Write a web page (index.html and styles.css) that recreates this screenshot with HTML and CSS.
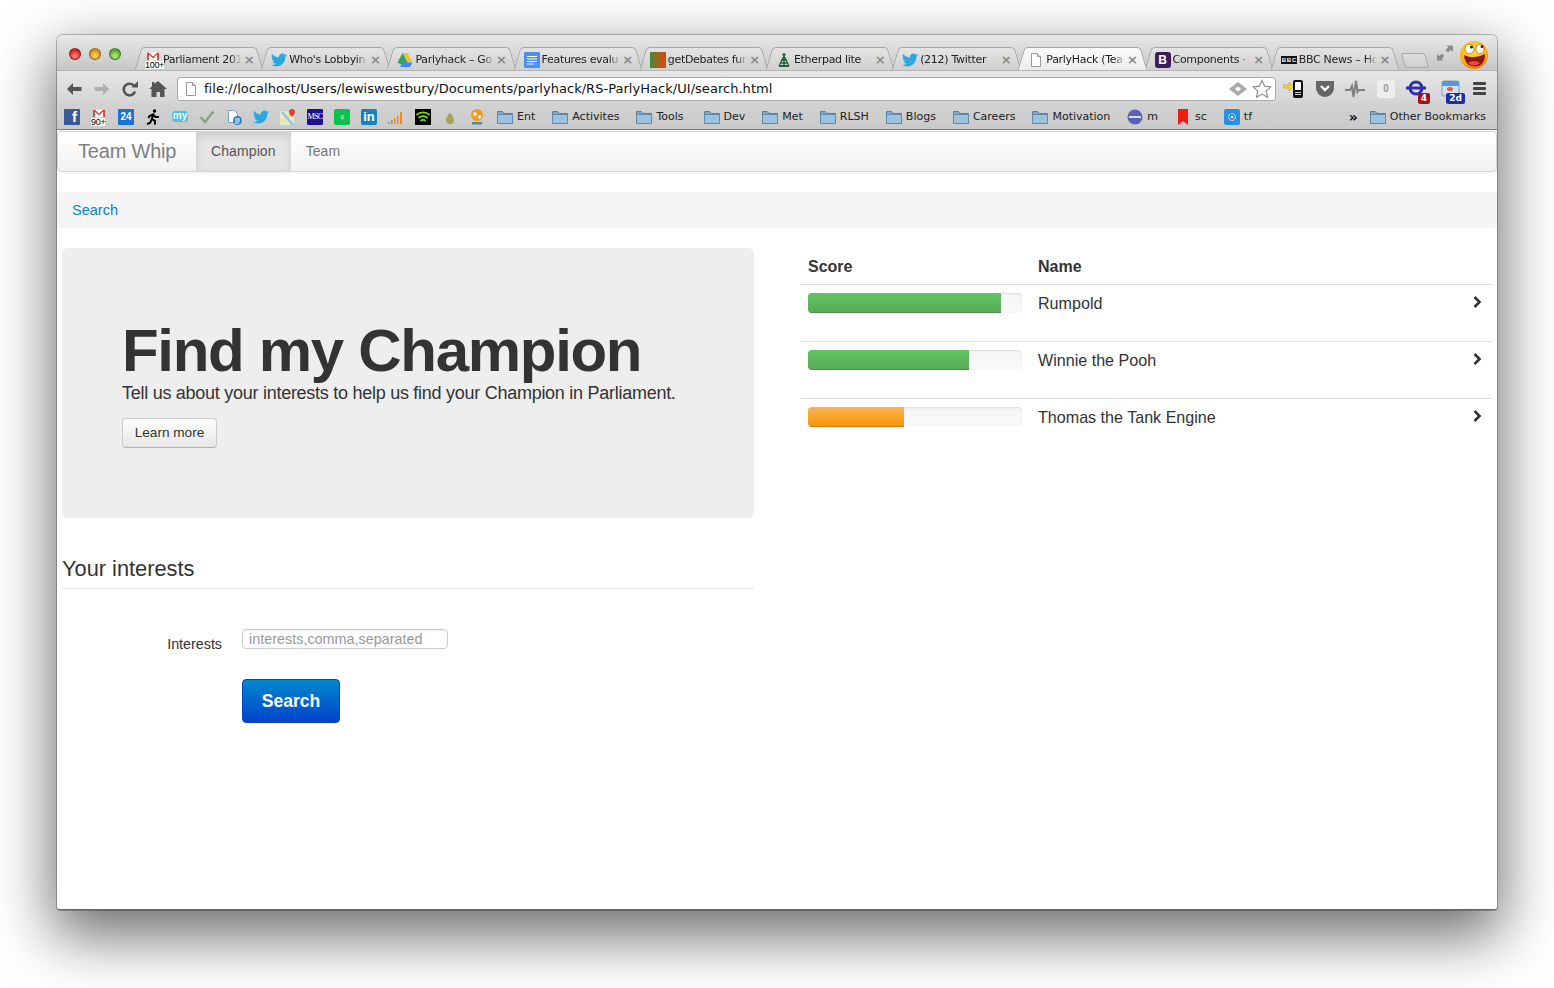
FILE: index.html
```html
<!DOCTYPE html>
<html lang="en">
<head>
    <meta charset="UTF-8">
    <meta name="viewport" content="width=device-width, initial-scale=1.0">
    <title>ParlyHack (Team Whip)</title>
    <link rel="stylesheet" href="styles.css">
</head>
<body>
    <svg class="sprite" width="0" height="0">
        <symbol id="i-bird" viewBox="0 0 24 24"><path fill="#2aa9e0" d="M23.953 4.57a10 10 0 01-2.825.775 4.958 4.958 0 002.163-2.723c-.951.555-2.005.959-3.127 1.184a4.92 4.92 0 00-8.384 4.482C7.69 8.095 4.067 6.13 1.64 3.162a4.822 4.822 0 00-.666 2.475c0 1.71.87 3.213 2.188 4.096a4.904 4.904 0 01-2.228-.616v.06a4.923 4.923 0 003.946 4.827 4.996 4.996 0 01-2.212.085 4.936 4.936 0 004.604 3.417 9.867 9.867 0 01-6.102 2.105c-.39 0-.779-.023-1.17-.067a13.995 13.995 0 007.557 2.209c9.053 0 13.998-7.496 13.998-13.985 0-.21 0-.42-.015-.63A9.935 9.935 0 0024 4.59z"/></symbol>
        <symbol id="i-page" viewBox="0 0 16 16"><path fill="#fff" stroke="#9a9a9a" d="M3.5 1.5h6l3 3v10h-9z"/><path fill="#ddd" stroke="#9a9a9a" d="M9.5 1.5v3h3"/></symbol>
        <symbol id="i-folder" viewBox="0 0 16 16"><path fill="#7ea9cc" stroke="#5b7f9f" d="M.5 14.500v-12h5l1.500 2h8.500v10z"/><path fill="#9cc2e0" stroke="#6389aa" d="M.5 14.500v-9h15v9z"/></symbol>
        <symbol id="i-gmail" viewBox="0 0 16 16"><rect y="1" width="16" height="10" fill="#fff"/><path fill="#d6453a" d="M0 1h2.500v10H0zM13.500 1H16v10h-2.500zM0 1h2.500L8 6l5.500-5H16L8 8.500z"/></symbol>
    </svg>

    <div class="window">
        <header class="chrome">
            <div class="titlebar">
                <div class="traffic">
                    <span class="light light-red"></span>
                    <span class="light light-amber"></span>
                    <span class="light light-green"></span>
                </div>
                <div class="tabs">
                    <div class="tab">
                        <span class="fav fav-gmail"><svg width="16" height="12"><use href="#i-gmail"/></svg><b>100+</b></span>
                        <span class="tab-title">Parliament 201</span><span class="tab-x">×</span>
                    </div>
                    <div class="tab">
                        <svg class="fav" width="16" height="16"><use href="#i-bird"/></svg>
                        <span class="tab-title">Who's Lobbyin</span><span class="tab-x">×</span>
                    </div>
                    <div class="tab">
                        <svg class="fav" width="16" height="16" viewBox="0 0 16 16"><path fill="#f5c02e" d="M5.500 1h5l5 9h-5z"/><path fill="#2ba160" d="M5.500 1l5 9-2.500 4.500L.5 10.500z" opacity=".95"/><path fill="#4285f4" d="M5.500 10.500h10l-2.500 4.500H3z"/></svg>
                        <span class="tab-title">Parlyhack – Go</span><span class="tab-x">×</span>
                    </div>
                    <div class="tab">
                        <svg class="fav" width="16" height="16" viewBox="0 0 16 16"><rect width="16" height="16" rx="1" fill="#4d8ff5"/><path stroke="#fff" d="M3 4.500h10M3 7h10M3 9.500h10M3 12h7"/></svg>
                        <span class="tab-title">Features evalu</span><span class="tab-x">×</span>
                    </div>
                    <div class="tab">
                        <span class="fav fav-debates"></span>
                        <span class="tab-title">getDebates fun</span><span class="tab-x">×</span>
                    </div>
                    <div class="tab">
                        <svg class="fav" width="16" height="16" viewBox="0 0 16 16"><path fill="none" stroke="#24603f" stroke-width="1.300" d="M8 4L3 14M8 4l5 10M4 11h8M5 8h6M8 4v10"/><circle cx="8" cy="2.500" r="1.500" fill="#24603f"/><path fill="#24603f" d="M3 13h10v2H3z"/></svg>
                        <span class="tab-title">Etherpad lite</span><span class="tab-x">×</span>
                    </div>
                    <div class="tab">
                        <svg class="fav" width="16" height="16"><use href="#i-bird"/></svg>
                        <span class="tab-title">(212) Twitter</span><span class="tab-x">×</span>
                    </div>
                    <div class="tab tab-active">
                        <svg class="fav" width="16" height="16"><use href="#i-page"/></svg>
                        <span class="tab-title">ParlyHack (Tea</span><span class="tab-x">×</span>
                    </div>
                    <div class="tab">
                        <span class="fav fav-boot">B</span>
                        <span class="tab-title">Components ·</span><span class="tab-x">×</span>
                    </div>
                    <div class="tab">
                        <span class="fav fav-bbc">BBC</span>
                        <span class="tab-title">BBC News – Ho</span><span class="tab-x">×</span>
                    </div>
                    <div class="new-tab"></div>
                </div>
                <svg class="fullscreen" width="16" height="16" viewBox="0 0 16 16"><path fill="#8a8a8a" d="M9.500 0.500H16V7l-2.300-2.300-2.700 2.700-2.400-2.400 2.700-2.700zM6.500 15.500H0V9l2.300 2.300L5 8.600 7.400 11l-2.700 2.700z"/></svg>
                <svg class="avatar" width="30" height="30" viewBox="0 0 30 30">
                    <defs><radialGradient id="face" cx=".45" cy=".35" r=".7"><stop offset="0" stop-color="#ffe23a"/><stop offset=".7" stop-color="#fdb011"/><stop offset="1" stop-color="#d96a06"/></radialGradient></defs>
                    <circle cx="15" cy="15" r="14" fill="url(#face)"/>
                    <ellipse cx="10.500" cy="9" rx="4.500" ry="4.800" fill="#fff" stroke="#8a5200" stroke-width=".6"/>
                    <ellipse cx="21" cy="9" rx="4" ry="4.800" fill="#fff" stroke="#8a5200" stroke-width=".6"/>
                    <circle cx="12.500" cy="7" r="1.500" fill="#222"/><circle cx="23" cy="6.500" r="1.500" fill="#222"/>
                    <path fill="#8c1712" d="M5 15q10 5 21-1 0 12-10 12.500Q6 26.500 5 15z"/>
                    <path fill="#ea4a3f" d="M9 23q6-4 12 0-6 5-12 0z"/>
                </svg>
            </div>

            <div class="toolbar">
                <svg class="tool" width="18" height="16" viewBox="0 0 18 16"><path fill="#555" d="M2 8l6-6v4h8.500v4H8v4z"/></svg>
                <svg class="tool" width="18" height="16" viewBox="0 0 18 16"><path fill="#b0b0b0" d="M16 8l-6-6v4H1.500v4H10v4z"/></svg>
                <svg class="tool" width="18" height="16" viewBox="0 0 18 16"><path fill="none" stroke="#555" stroke-width="2.600" d="M14 10.500a5.800 5.800 0 1 1-.6-5.200"/><path fill="#555" d="M10.500 6.500H17V0z"/></svg>
                <svg class="tool" width="18" height="16" viewBox="0 0 18 16"><path fill="#555" d="M9 0l9 8h-2.500v8H11v-5H7.500v5H2.500V8H0l3-2.700V1h2.500v2.100z"/></svg>
                <div class="omnibox">
                    <svg width="16" height="16"><use href="#i-page"/></svg>
                    <span class="url">file://localhost/Users/lewiswestbury/Documents/parlyhack/RS-ParlyHack/UI/search.html</span>
                    <svg width="18" height="14" viewBox="0 0 18 14"><path fill="#a9a9a9" d="M9 0l9 7-9 7-9-7zM9 4.500L5.800 7 9 9.500 12.200 7z"/></svg>
                    <svg width="20" height="20" viewBox="0 0 20 20"><path fill="#fff" stroke="#8d8d8d" stroke-width="1.200" d="M10 1.500l2.600 5.700 6.200.7-4.600 4.200 1.300 6.100-5.500-3.100-5.500 3.100 1.300-6.100L1.200 7.900l6.200-.7z"/></svg>
                </div>
                <div class="extensions">
                    <svg width="22" height="20" viewBox="0 0 22 20"><path fill="#f2de14" stroke="#a89a10" stroke-width=".5" d="M0 6h6V3l5 4.500L6 12V9H0z"/><rect x="10" y="1" width="10" height="18" rx="2" fill="#111"/><rect x="12" y="3" width="6" height="8" fill="#fff"/><path stroke="#fff" stroke-width=".8" d="M12 13.500h6M12 15.500h6"/></svg>
                    <svg width="20" height="18" viewBox="0 0 20 18"><path fill="#666" d="M1 1h18v7a9 9 0 0 1-18 0z"/><path fill="none" stroke="#fff" stroke-width="2.400" d="M6 6l4 4 4-4"/></svg>
                    <svg width="20" height="18" viewBox="0 0 20 18"><path fill="none" stroke="#808080" stroke-width="2" d="M0 10h5l2-4 1.500 11L11 1l1.500 11 1.500-2h6"/></svg>
                    <span class="zero">0</span>
                    <span class="ext-badge">
                        <svg width="20" height="16" viewBox="0 0 20 16"><circle cx="10" cy="8" r="6" fill="none" stroke="#2f2fa8" stroke-width="3"/><rect y="6.500" width="20" height="3" fill="#2f2fa8"/></svg>
                        <b class="badge badge-red">4</b>
                    </span>
                    <span class="ext-badge ext-cal">
                        <svg width="20" height="18" viewBox="0 0 20 18"><rect x="1" y="1" width="17" height="15" rx="2" fill="#cfe0f2" stroke="#7f9fc0"/><rect x="1" y="1" width="17" height="5" fill="#5a97d6"/><ellipse cx="9" cy="9" rx="3" ry="2" fill="#e0605a"/></svg>
                        <b class="badge badge-blue">2d</b>
                    </span>
                    <span class="menu"><i></i><i></i><i></i></span>
                </div>
            </div>

            <nav class="bookmarks">
                <span class="bm bm-fb">f</span>
                <span class="fav fav-gmail bm-icon"><svg width="16" height="12"><use href="#i-gmail"/></svg><b>90+</b></span>
                <span class="bm bm-cal">24</span>
                <svg class="bm-icon" width="16" height="16" viewBox="0 0 16 16"><circle cx="9.500" cy="2" r="1.700"/><path fill="none" stroke="#000" stroke-width="2" d="M2 15l3-1 2-4 3 2 0 3.500M7 10l1-4.500L4.500 7 3.500 9M8 5.500l2.500 2.500H14"/></svg>
                <span class="bm bm-my">my</span>
                <svg class="bm-icon" width="16" height="16" viewBox="0 0 16 16"><path fill="none" stroke="#8ba07f" stroke-width="2.400" d="M1.500 8l4.500 5L14.500 2.500"/></svg>
                <svg class="bm-icon" width="16" height="16" viewBox="0 0 16 16"><path fill="#fff" stroke="#7da5c9" d="M2.500 1.500h6l3 3v9h-9z"/><rect x="7" y="7" width="9" height="9" rx="4.500" fill="#2f7fc1"/><path stroke="#fff" d="M9 10h5M9 12h5M9 14h4"/></svg>
                <svg class="bm-icon" width="16" height="16"><use href="#i-bird"/></svg>
                <svg class="bm-icon" width="16" height="16" viewBox="0 0 16 16"><rect y="2" width="14" height="14" fill="#dcecd0"/><path stroke="#f3e38b" stroke-width="3" d="M0 13L13 3"/><path stroke="#9ac1e8" stroke-width="2.500" d="M2 3l11 13"/><path fill="#e2402f" d="M12 0a3 3 0 0 1 3 3c0 2-3 5-3 5s-3-3-3-5a3 3 0 0 1 3-3z"/></svg>
                <span class="bm bm-msc">MSC</span>
                <span class="bm bm-green">♀</span>
                <span class="bm bm-in">in</span>
                <svg class="bm-icon" width="16" height="16" viewBox="0 0 16 16"><path fill="#8d8d8d" d="M0 13h1.500v2H0zM3 11h1.500v4H3z"/><path fill="#f08a1d" d="M6 9h1.500v6H6zM9 7h1.500v8H9zM12 3h2v12h-2z"/></svg>
                <svg class="bm-icon" width="16" height="16" viewBox="0 0 16 16"><rect width="16" height="16" fill="#000"/><path fill="none" stroke="#6fdc1a" stroke-width="1.800" d="M1.500 6a9.500 9.500 0 0 1 13 0M3.500 9a6.500 6.500 0 0 1 9 0M5.500 12a3.500 3.500 0 0 1 5 0"/></svg>
                <svg class="bm-icon" width="16" height="16" viewBox="0 0 16 16"><path fill="#a3a35a" d="M8 3c1 3 4 5 4 8a4 4 0 0 1-8 0c0-3 3-5 4-8z"/></svg>
                <svg class="bm-icon" width="16" height="16" viewBox="0 0 16 16"><circle cx="8" cy="6" r="6" fill="#f39a1f"/><path fill="#fff" d="M5 3l3 1-1 3-3-1zM9 7l3-1 0 3-2 1z"/><rect x="3" y="13" width="10" height="2.500" fill="#4f8f9a"/></svg>
                <a class="bm-folder bm-first"><svg width="16" height="16"><use href="#i-folder"/></svg>Ent</a>
                <a class="bm-folder"><svg width="16" height="16"><use href="#i-folder"/></svg>Activites</a>
                <a class="bm-folder bm-wide"><svg width="16" height="16"><use href="#i-folder"/></svg>Tools</a>
                <a class="bm-folder"><svg width="16" height="16"><use href="#i-folder"/></svg>Dev</a>
                <a class="bm-folder"><svg width="16" height="16"><use href="#i-folder"/></svg>Met</a>
                <a class="bm-folder"><svg width="16" height="16"><use href="#i-folder"/></svg>RLSH</a>
                <a class="bm-folder"><svg width="16" height="16"><use href="#i-folder"/></svg>Blogs</a>
                <a class="bm-folder"><svg width="16" height="16"><use href="#i-folder"/></svg>Careers</a>
                <a class="bm-folder"><svg width="16" height="16"><use href="#i-folder"/></svg>Motivation</a>
                <a class="bm-folder"><svg width="16" height="16" viewBox="0 0 16 16"><circle cx="8" cy="8" r="7.500" fill="#5a62b8"/><path fill="#d9dbef" d="M2 7h12v2H2z"/></svg>m</a>
                <a class="bm-folder"><svg width="16" height="16" viewBox="0 0 16 16"><path fill="#f01c10" d="M3 0h10v16l-5-4-5 4z"/></svg>sc</a>
                <a class="bm-folder"><svg width="16" height="16" viewBox="0 0 16 16"><rect width="16" height="16" rx="2" fill="#2b8fe0"/><circle cx="8" cy="8" r="3.500" fill="none" stroke="#fff" stroke-dasharray="2 1"/><circle cx="8" cy="8" r="1.200" fill="#fff"/></svg>tf</a>
                <span class="bm-more">»</span>
                <a class="bm-folder bm-last"><svg width="16" height="16"><use href="#i-folder"/></svg>Other Bookmarks</a>
            </nav>
        </header>

        <div class="page">
            <div class="navbar">
                <a class="brand">Team Whip</a>
                <a class="nav-item active">Champion</a>
                <a class="nav-item">Team</a>
            </div>

            <div class="breadcrumb"><a>Search</a></div>

            <div class="columns">
                <section>
                    <div class="hero">
                        <h1>Find my Champion</h1>
                        <p>Tell us about your interests to help us find your Champion in Parliament.</p>
                        <a class="btn">Learn more</a>
                    </div>

                    <form class="interests">
                        <h2>Your interests</h2>
                        <div class="field">
                            <label for="interests">Interests</label>
                            <input id="interests" type="text" placeholder="interests,comma,separated">
                        </div>
                        <div class="actions">
                            <button type="button" class="btn-primary">Search</button>
                        </div>
                    </form>
                </section>

                <section>
                    <table class="results">
                        <thead>
                            <tr><th class="col-score">Score</th><th>Name</th><th class="col-go"></th></tr>
                        </thead>
                        <tbody>
                            <tr>
                                <td><div class="progress"><div class="bar" style="width: 90%"></div></div></td>
                                <td>Rumpold</td>
                                <td class="col-go"><svg class="chevron" width="10" height="14" viewBox="0 0 10 14"><path fill="none" stroke="#333" stroke-width="2.600" d="M2.500 2l5 5-5 5"/></svg></td>
                            </tr>
                            <tr>
                                <td><div class="progress"><div class="bar" style="width: 75%"></div></div></td>
                                <td>Winnie the Pooh</td>
                                <td class="col-go"><svg class="chevron" width="10" height="14" viewBox="0 0 10 14"><path fill="none" stroke="#333" stroke-width="2.600" d="M2.500 2l5 5-5 5"/></svg></td>
                            </tr>
                            <tr>
                                <td><div class="progress"><div class="bar bar-warning" style="width: 45%"></div></div></td>
                                <td>Thomas the Tank Engine</td>
                                <td class="col-go"><svg class="chevron" width="10" height="14" viewBox="0 0 10 14"><path fill="none" stroke="#333" stroke-width="2.600" d="M2.500 2l5 5-5 5"/></svg></td>
                            </tr>
                        </tbody>
                    </table>
                </section>
            </div>
        </div>
    </div>
</body>
</html>
```

FILE: styles.css
```css
* {
    box-sizing: border-box;
}

html, body {
    margin: 0;
    height: 100%;
    overflow: hidden;
    background: #fff;
}

body {
    padding: 35px 57px 0;
    font-family: "Liberation Sans", Arial, sans-serif;
    color: #333;
}

.sprite {
    display: block;
    height: 0;
}

.window {
    height: 875px;
    background: #fff;
    border-radius: 6px 6px 3px 3px;
    box-shadow: 0 22px 60px 4px rgba(0, 0, 0, 0.58), 0 0 0 1px rgba(0, 0, 0, 0.25);
    overflow: hidden;
    border-bottom: 1px solid #666;
}

/* Browser chrome */
.chrome {
    height: 95px;
    font-family: "DejaVu Sans", sans-serif;
    font-size: 11px;
    color: #222;
    border-bottom: 1px solid #7d7d7d;
}

.titlebar {
    height: 35px;
    display: flex;
    align-items: flex-end;
    background: linear-gradient(#e8e8e8, #c6c6c6);
    position: relative;
}

.traffic {
    width: 78px;
    height: 35px;
    padding: 13px 0 0 12px;
    display: flex;
    gap: 8px;
}

.light {
    width: 12px;
    height: 12px;
    border-radius: 50%;
    border: 1px solid rgba(0, 0, 0, 0.35);
}

.light-red { background: radial-gradient(circle at 50% 70%, #ff8a80, #d6201a 70%); }
.light-amber { background: radial-gradient(circle at 50% 70%, #ffd77a, #d98a10 70%); }
.light-green { background: radial-gradient(circle at 50% 70%, #b9ef8a, #55a52c 70%); }

.tabs {
    display: flex;
    height: 23px;
}

.tab {
    width: 126.2px;
    height: 23px;
    padding: 2px 6px 0 10px;
    display: flex;
    align-items: center;
    position: relative;
    flex: none;
}

.tab::before,
.tab::after {
    content: "";
    position: absolute;
    top: 0;
    bottom: 0;
    background: linear-gradient(#e4e4e4, #cfcfcf);
    border-top: 1px solid #a8a8a8;
}

.tab::before {
    left: 3px;
    right: 40%;
    border-left: 1px solid #a0a0a0;
    border-radius: 4px 0 0 0;
    transform: skewX(-17deg);
}

.tab::after {
    right: 1px;
    left: 40%;
    border-right: 1px solid #a0a0a0;
    border-radius: 0 4px 0 0;
    transform: skewX(17deg);
}

.tab-active {
    z-index: 1;
}

.tab-active::before,
.tab-active::after {
    background: linear-gradient(#fbfbfb, #ececec);
}

.tab > * {
    position: relative;
    z-index: 1;
}

.fav {
    flex: none;
    width: 16px;
    height: 16px;
    display: block;
}

.fav-gmail {
    position: relative;
    background: transparent;
}

.fav-gmail svg {
    display: block;
}

.fav-gmail b {
    position: absolute;
    left: 0;
    bottom: -1px;
    font: 9px/8px "Liberation Sans", sans-serif;
    letter-spacing: -0.3px;
    color: #000;
    background: #fff;
    white-space: nowrap;
}

.fav-debates {
    background: linear-gradient(90deg, #3f8d3c, #c9500f 75%);
}

.fav-boot {
    background: #3d1a5b;
    border-radius: 3px;
    color: #fff;
    font: bold 12px/16px "Liberation Sans", sans-serif;
    text-align: center;
}

.fav-bbc {
    height: 8px;
    padding-left: 1px;
    background: #111;
    color: #fff;
    font: bold 6px/8px "Liberation Sans", sans-serif;
    letter-spacing: 0.8px;
}

.tab-title {
    flex: 1;
    margin-left: 2px;
    letter-spacing: -0.3px;
    white-space: nowrap;
    -webkit-mask-image: linear-gradient(90deg, #000 84%, transparent 98%);
    mask-image: linear-gradient(90deg, #000 84%, transparent 98%);
}

.tab-x {
    flex: none;
    width: 12px;
    font-size: 13px;
    font-weight: bold;
    line-height: 15px;
    color: #888;
    text-align: center;
}

.new-tab {
    width: 24px;
    height: 15px;
    margin: 6px 0 0 6px;
    border: 1px solid #aaa;
    border-radius: 3px;
    background: linear-gradient(#dedede, #cfcfcf);
    transform: skewX(17deg);
}

.fullscreen {
    position: absolute;
    left: 1380px;
    top: 10px;
}

.avatar {
    position: absolute;
    right: 8px;
    top: 5px;
}

.toolbar {
    height: 34px;
    padding: 2px 11px 0 8px;
    display: flex;
    align-items: center;
    background: linear-gradient(#e6e6e6, #d4d4d4);
    border-top: 1px solid #b5b5b5;
}

.tool {
    flex: none;
    margin-right: 10px;
}

.omnibox {
    width: 1099px;
    height: 24px;
    padding: 0 3px 0 5px;
    display: flex;
    align-items: center;
    background: #fff;
    border: 1px solid #ababab;
    border-radius: 3px;
}

.url {
    flex: 1;
    margin-left: 5px;
    font-size: 13px;
    letter-spacing: 0.035px;
    white-space: nowrap;
    color: #111;
}

.omnibox svg + svg {
    margin-left: 5px;
}

.extensions {
    flex: 1;
    padding-left: 7px;
    display: flex;
    align-items: center;
    gap: 10px;
}

.zero {
    width: 18px;
    height: 18px;
    margin-left: 2px;
    background: #eee;
    color: #999;
    border-radius: 2px;
    font: bold 10px/18px "Liberation Sans", sans-serif;
    text-align: center;
}

.ext-badge {
    position: relative;
    display: block;
    height: 18px;
    margin-left: 1px;
}

.ext-cal {
    margin-left: 5px;
}

.badge {
    position: absolute;
    right: -4px;
    bottom: -6px;
    padding: 0 3px;
    border-radius: 2px;
    color: #fff;
    font: bold 9px/11px "DejaVu Sans", sans-serif;
}

.badge-red { background: #a3101c; }
.badge-blue { background: #1a2fae; }

.menu {
    width: 13px;
    margin-left: 2px;
    display: flex;
    flex-direction: column;
    gap: 2px;
}

.menu i {
    height: 3px;
    background: #444;
    border-radius: 1px;
}

.bookmarks {
    height: 25px;
    padding: 0 11px 0 7px;
    display: flex;
    align-items: center;
    background: linear-gradient(#d2d2d2, #c9c9c9);
}

.bm,
.bm-icon {
    flex: none;
    width: 16px;
    height: 16px;
    margin-right: 11px;
}

.bm {
    display: block;
    border-radius: 1px;
    color: #fff;
    text-align: center;
    font: bold 10px/16px "Liberation Sans", sans-serif;
}

.bm-fb { background: #3b5998; font-size: 15px; text-align: right; padding-right: 3px; }
.bm-cal { background: #1a73d0; }
.bm-my { background: #4fc0e8; height: 11px; line-height: 10px; border-radius: 3px; }
.bm-msc { background: #25108a; font: 8px/16px "Liberation Serif", serif; letter-spacing: -0.6px; }
.bm-green { background: #0fc050; font-size: 11px; border-radius: 2px; }
.bm-in { background: #1582bb; font-size: 13px; border-radius: 2px; }

.bm-folder {
    flex: none;
    display: flex;
    align-items: center;
    gap: 4px;
    margin-right: 17px;
    color: #222;
    white-space: nowrap;
}

.bm-first {
    margin-left: 1px;
}

.bm-wide {
    margin-right: 20px;
}

.bm-more {
    margin-left: auto;
    margin-right: 12px;
    font-size: 14px;
    font-weight: bold;
    color: #111;
}

.bm-last {
    margin-right: 0;
}

/* Page */
.navbar {
    height: 41px;
    margin-top: 1px;
    display: flex;
    background: linear-gradient(#fff, #f2f2f2);
    border: 1px solid #d4d4d4;
    border-radius: 4px;
    box-shadow: 0 1px 4px rgba(0, 0, 0, 0.065);
    font-size: 14px;
}

.brand {
    width: 138px;
    padding-left: 20px;
    font-size: 20px;
    letter-spacing: -0.2px;
    line-height: 39px;
    color: #808080;
}

.nav-item {
    padding: 0 15px;
    line-height: 39px;
    letter-spacing: 0.1px;
    color: #777;
}

.nav-item.active {
    background: #e5e5e5;
    color: #555;
    box-shadow: inset 0 3px 8px rgba(0, 0, 0, 0.125);
}

.breadcrumb {
    height: 36px;
    margin-top: 20px;
    padding: 0 15px;
    background: #f5f5f5;
    border-radius: 4px;
    font-size: 14.500px;
    line-height: 36px;
}

.breadcrumb a {
    color: #0a80cc;
}

.columns {
    margin-top: 20px;
    padding: 0 6px 0 5px;
    display: grid;
    grid-template-columns: 692px 691px;
    column-gap: 46px;
}

.hero {
    height: 270px;
    padding: 73px 60px 0;
    background: #eee;
    border-radius: 6px;
}

.hero h1 {
    margin: 0;
    font-size: 60px;
    line-height: 60px;
    letter-spacing: -1.300px;
    color: #333;
    white-space: nowrap;
}

.hero p {
    margin: -1px 0 12px;
    font-size: 18px;
    line-height: 26px;
    letter-spacing: -0.27px;
    white-space: nowrap;
}

.btn {
    display: inline-block;
    width: 95px;
    height: 30px;
    font-size: 13.600px;
    line-height: 28px;
    text-align: center;
    color: #333;
    background: linear-gradient(#fff, #e6e6e6);
    border: 1px solid #ccc;
    border-bottom-color: #b3b3b3;
    border-radius: 4px;
}

.interests h2 {
    height: 41px;
    margin: 30px 0 0;
    font-size: 21.800px;
    font-weight: normal;
    line-height: 42px;
    border-bottom: 1px solid #e5e5e5;
}

.field {
    margin-top: 40px;
    display: flex;
}

.field label {
    width: 160px;
    padding-top: 5px;
    font-size: 14.300px;
    line-height: 20px;
    text-align: right;
}

.field input {
    width: 206px;
    height: 20px;
    margin-left: 20px;
    padding: 0 6px;
    font: 14.400px "Liberation Sans", sans-serif;
    color: #555;
    border: 1px solid #ccc;
    border-radius: 4px;
    box-shadow: inset 0 1px 1px rgba(0, 0, 0, 0.075);
}

.field input::placeholder {
    color: #999;
}

.actions {
    margin: 25px 0 0 180px;
}

.btn-primary {
    display: block;
    width: 98px;
    height: 44px;
    padding: 0;
    font: bold 17.500px "Liberation Sans", sans-serif;
    color: #fff;
    background: linear-gradient(#0088cc, #0044cc);
    border: 1px solid #0044cc;
    border-radius: 4px;
}

.results {
    width: 100%;
    border-collapse: collapse;
    font-size: 16.100px;
}

.results th {
    height: 36px;
    padding: 9px 8px 7px;
    font-size: 16px;
    line-height: 20px;
    text-align: left;
}

.results td {
    height: 57px;
    padding: 8px;
    line-height: 20px;
    vertical-align: top;
    border-top: 1px solid #ddd;
}

.col-score {
    width: 230px;
}

.col-go {
    width: 30px;
}

.results td.col-go {
    padding: 10px 0 0 11px;
}

.chevron {
    display: block;
}

.progress {
    height: 20px;
    background: linear-gradient(#f5f5f5, #f9f9f9);
    border-radius: 4px;
    overflow: hidden;
    box-shadow: inset 0 1px 2px rgba(0, 0, 0, 0.1);
}

.bar {
    height: 100%;
    background: linear-gradient(#62c462, #57a957);
    box-shadow: inset 0 -1px 0 rgba(0, 0, 0, 0.15);
}

.bar-warning {
    background: linear-gradient(#fbb450, #f89406);
}
```
